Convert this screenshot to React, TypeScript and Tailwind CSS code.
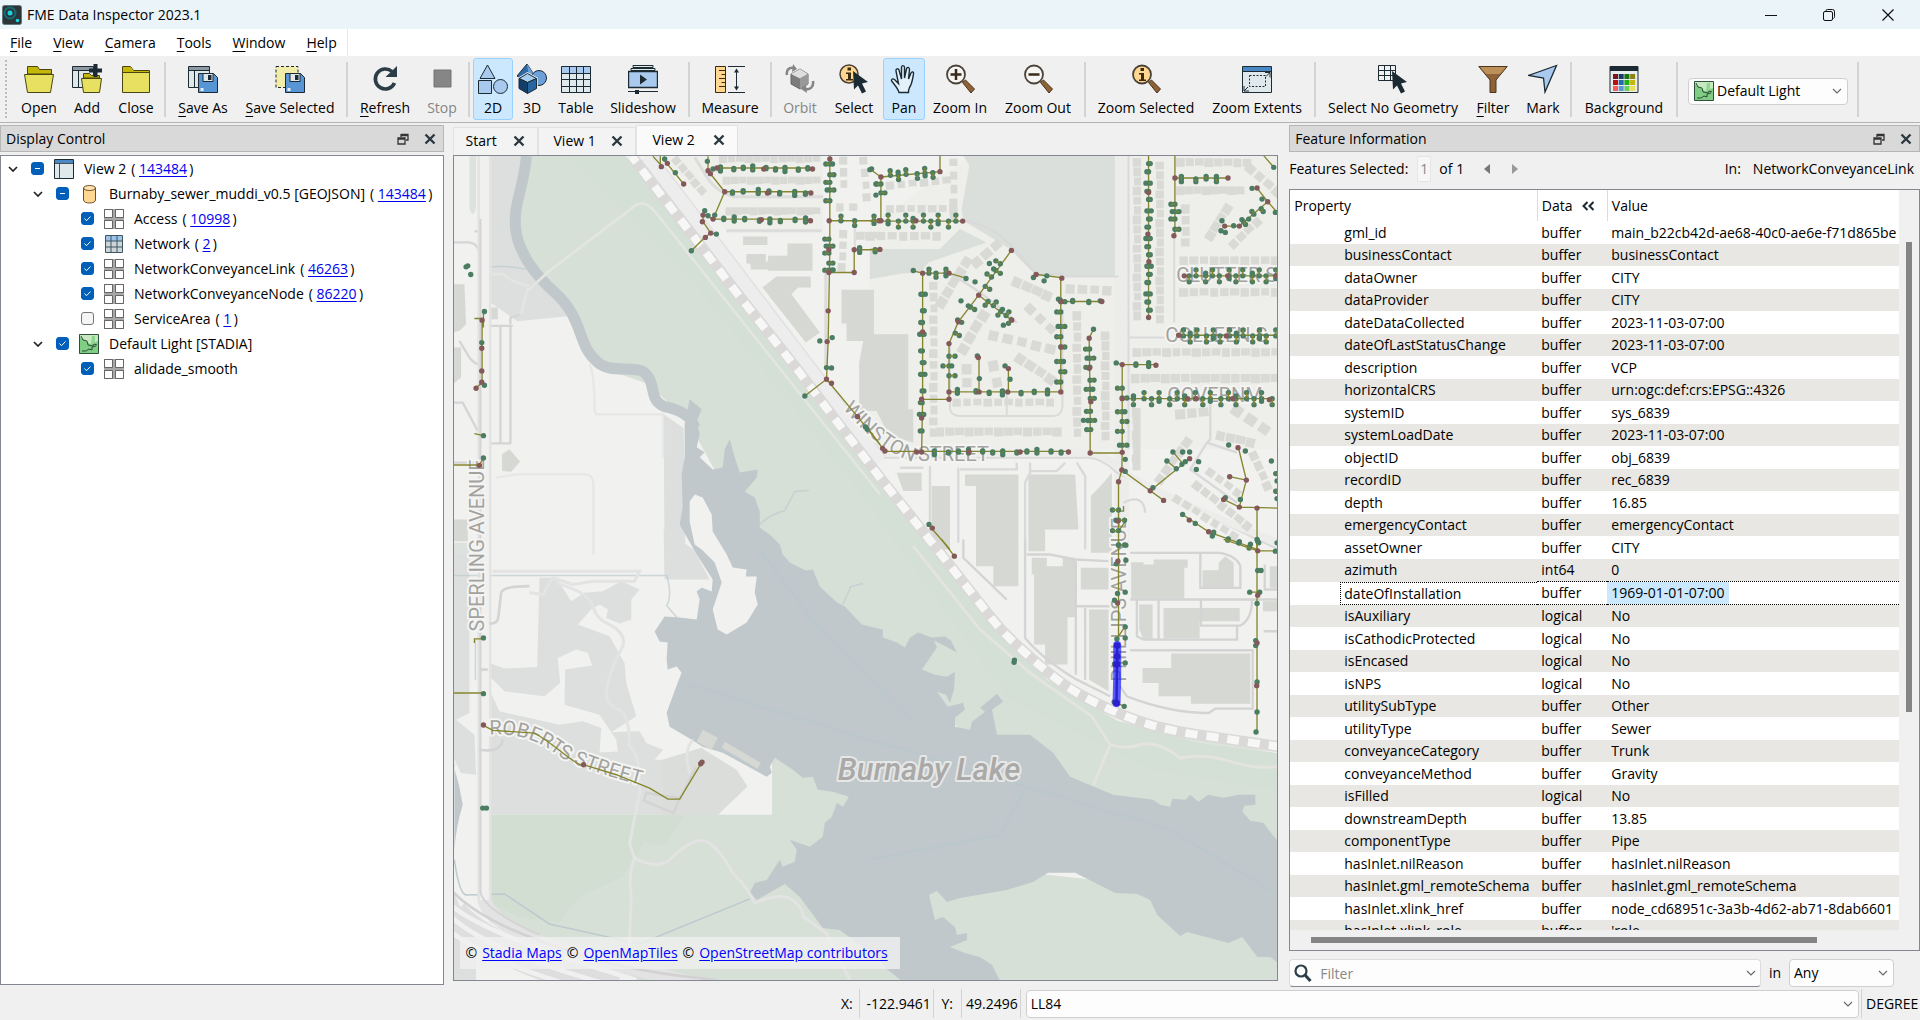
import React from "react";

/* ------------------------------------------------------------------ */
/* Toolbar icons                                                       */
/* ------------------------------------------------------------------ */

const INK = "#1c2b33";

function Icon({ children }: { children: React.ReactNode }) {
  return (
    <svg viewBox="0 0 30 30" className="size-[30px]" fill="none" aria-hidden="true">
      {children}
    </svg>
  );
}

const Floppy = () => (
  <g>
    <path d="M10.500 9.500h15l4 4v15h-19z" fill="#5795d4" stroke={INK} />
    <path d="M15 9.500h10v8h-10z" fill="#dfe9ec" stroke={INK} />
    <path d="M20 11h3.500v5h-3.500z" fill={INK} />
    <path d="M12.500 24h3v3h-3z" fill="#e8eef0" />
  </g>
);

const WindowBack = () => (
  <g>
    <path d="M.5 2.500h21v21h-21z" fill="#dfe7e8" stroke={INK} />
    <path d="M1 3h20v3H1z" fill="#8e9aa3" />
    <path d="M1 6.500h20M6.500 6.500v17" stroke={INK} />
  </g>
);

const Magnifier = ({ fill }: { fill: string }) => (
  <g>
    <path d="M17.500 18.500l3-2.500 9 9-3.500 4z" fill="#8f6136" stroke="#4a3520" />
    <circle cx="11" cy="10.500" r="9" fill={fill} stroke="#4a4136" strokeWidth="1.800" />
  </g>
);

const Info = () => (
  <path d="M9.500 4h3.500v3h-3.500zM8 9h5v6.500h2v1.500H8v-1.500h2v-5H8z" fill="#3d2a12" />
);

const Arrow = () => <path d="M14 7l15 11-6 1.500 4 8-4 2-4-8-4 4z" fill={INK} />;

const icons: Record<string, React.ReactNode> = {
  open: (
    <Icon>
      <path d="M3.500 10V2.500h10l2 3h12V10z" fill="#c4b70a" stroke="#4a4613" />
      <path d="M.5 10.500h29l-3 18h-23z" fill="#e8e060" stroke="#4a4613" />
    </Icon>
  ),
  add: (
    <Icon>
      <WindowBack />
      <path d="M11.500 14V9.500h6l2 2h8V14z" fill="#c4b70a" stroke="#4a4613" />
      <path d="M9.500 14.500h20l-2 14h-16z" fill="#e8e060" stroke="#4a4613" />
      <path d="M23.500 0v13M17 6.500h13" stroke={INK} strokeWidth="4" />
    </Icon>
  ),
  close: (
    <Icon>
      <path d="M1.500 28.500v-26h8l3 4h16v22z" fill="#e8e060" stroke="#4a4613" />
      <path d="M2 8V3h7.500l3 4H28v1z" fill="#c4b70a" />
      <path d="M1.500 8.500h27" stroke="#4a4613" />
    </Icon>
  ),
  saveAs: (
    <Icon>
      <WindowBack />
      <Floppy />
    </Icon>
  ),
  saveSel: (
    <Icon>
      <path d="M1 2.500h22v21H1z" fill="#f1ecaa" stroke={INK} strokeDasharray="3 2" />
      <Floppy />
    </Icon>
  ),
  refresh: (
    <Icon>
      <path d="M22 7.500A10 10 0 1 0 24.500 19" stroke="#2b3d47" strokeWidth="3.600" />
      <path d="M27 2v11H15.500z" fill="#2b3d47" />
    </Icon>
  ),
  stop: (
    <Icon>
      <path d="M7 6h17v17H7z" fill="#868686" stroke="#747474" />
    </Icon>
  ),
  two: (
    <Icon>
      <path d="M9.500 1L17 14.500H2z" fill="#a9caee" stroke={INK} />
      <path d="M.5 16.500h13v13H.5z" fill="#a9caee" stroke={INK} />
      <circle cx="22.500" cy="22.500" r="7" fill="#a9caee" stroke={INK} />
    </Icon>
  ),
  three: (
    <Icon>
      <path d="M10 0L0 12l8 5 10-5z" fill="#2e6aa5" stroke={INK} />
      <path d="M10 0l2 13 6-1z" fill="#6ba0d8" />
      <circle cx="22" cy="14" r="7.500" fill="#6ba0d8" stroke={INK} />
      <path d="M2 14.500l8.500-5 9 5v10l-9 5-8.500-5z" fill="#164e80" stroke="#eef" strokeWidth="2.500" />
      <path d="M2 14.500l8.500-5 9 5-9 4z" fill="#a5cbef" stroke={INK} />
      <path d="M10.500 18.500v11l9-5v-10z" fill="#26659f" stroke={INK} />
      <path d="M2 14.500v10l8.500 5v-11z" fill="#123f69" stroke={INK} />
    </Icon>
  ),
  table: (
    <Icon>
      <path d="M.5 2.500h29v26H.5z" fill="#dfe9ec" />
      <path d="M1 3h28v6H1z" fill="#a9caee" />
      <path d="M.5 2.500h29v26H.5zM.5 9.500h29M.5 15.500h29M.5 22.500h29M8.500 2.500v26M15.500 2.500v26M22.500 2.500v26" stroke={INK} />
    </Icon>
  ),
  slides: (
    <Icon>
      <path d="M5 1.500h20v2H5zM3 4.500h24v2H3z" fill="#dfe9ec" stroke={INK} />
      <path d="M.5 7.500h29v16H.5z" fill="#a9caee" stroke={INK} strokeWidth="1.400" />
      <path d="M12 10.500l7 5-7 5z" fill={INK} />
      <path d="M0 27.500h30" stroke={INK} />
      <path d="M7 26h4v4H7z" fill={INK} />
    </Icon>
  ),
  measure: (
    <Icon>
      <path d="M.5 2.500h10v26H.5z" fill="#ffd790" stroke="#3a2a10" />
      <path d="M4 6.500h6M6.500 10.500h4M4 14.500h6M6.500 18.500h4M4 22.500h6" stroke="#3a2a10" />
      <path d="M13 2.500h17M13 28.500h17M21.500 5v21" stroke={INK} />
      <path d="M19 8.500l2.500-4 2.500 4zM19 22.500l2.500 4 2.500-4z" fill={INK} />
    </Icon>
  ),
  orbit: (
    <Icon>
      <path d="M6 10l9-5 8 5v10l-8 5-9-5z" fill="#7c7c7c" stroke="#666" />
      <path d="M6 10l9-5 8 5-8 4.500z" fill="#dedede" />
      <path d="M15 14.500V25l8-5V10z" fill="#999" />
      <path d="M2 11C1 6 4 3 9 4M28 17c1 6-3 9-8 8" stroke="#858585" strokeWidth="2.500" />
      <path d="M8 0l4 5-5 3zM21 21l-5 4 6 4z" fill="#858585" />
    </Icon>
  ),
  select: (
    <Icon>
      <circle cx="10" cy="10" r="9" fill="#ffd790" stroke="#4a4136" strokeWidth="1.500" />
      <g transform="translate(-1 -.5)">
        <Info />
      </g>
      <Arrow />
    </Icon>
  ),
  pan: (
    <Icon>
      <path
        d="M10 28.500c-1-4-4-7-7-11-1.500-2 .5-3.500 2.500-2l4 4L7 7c-.5-2.500 2-3 3-1l2.500 9V3.500c0-2.500 3-2.500 3 0V14l2-9c.5-2.500 3-2 3 .5L19.500 15 22 9c1-2 3-1 2.500 1-1 6-1.500 10-4 13.500-.8 1.500-1 3-1 5z"
        stroke={INK}
        strokeWidth="1.400"
        fill="#e3f1fb"
      />
    </Icon>
  ),
  zin: (
    <Icon>
      <Magnifier fill="#f5f5f3" />
      <path d="M5.500 10.500h11M11 5v11" stroke="#3a2a1c" strokeWidth="2.500" />
    </Icon>
  ),
  zout: (
    <Icon>
      <Magnifier fill="#f5f5f3" />
      <path d="M5.500 10.500h11" stroke="#3a2a1c" strokeWidth="2.500" />
    </Icon>
  ),
  zsel: (
    <Icon>
      <Magnifier fill="#ffd790" />
      <Info />
    </Icon>
  ),
  zext: (
    <Icon>
      <path d="M.5 2.500h29v26H.5z" fill="#dfe9ec" stroke={INK} />
      <path d="M1 3h28v4H1z" fill="#4a87c5" />
      <path d="M.5 7.500h29" stroke={INK} />
      <path d="M7.500 11.500h16v11h-16z" stroke={INK} strokeDasharray="2 1.500" />
      <path d="M28 8.500v5M28 8.500h-5M28 8.500l-4 4M2 27v-5M2 27h5M2 27l4-4" stroke={INK} />
    </Icon>
  ),
  nogeo: (
    <Icon>
      <path d="M.5 1.500h17v15H.5zM.5 6.500h17M.5 11.500h17M6.500 1.500v15M12.500 1.500v15" stroke={INK} />
      <Arrow />
    </Icon>
  ),
  filter: (
    <Icon>
      <path d="M.8 2.500h28.400L18 16v12.500h-6V16z" fill="#8f6136" stroke="#4a3520" />
      <path d="M2 3h26l-6 7H8z" fill="#bd9057" />
    </Icon>
  ),
  mark: (
    <Icon>
      <path d="M28.500 1.500L.5 11.500l15 2.500 1.500 14z" fill="#a9caee" stroke={INK} strokeWidth="1.300" />
    </Icon>
  ),
  bg: (
    <Icon>
      <path d="M1 2.500h28v26H1z" fill="#e7edef" stroke={INK} />
      <path d="M1 2h28v5H1z" fill={INK} />
      {[
        ["#7d1416", "#1a3a68", "#167312", "#8c8210"],
        ["#b80f12", "#2968ab", "#20b018", "#c5b80c"],
        ["#ff5a55", "#5c98d8", "#6cce60", "#e9df5a"],
      ].map((r, j) => r.map((c, i) => <rect key={c} x={4 + i * 5.700} y={10 + j * 6} width="5" height="5" fill={c} />))}
    </Icon>
  ),
};

type Tool = { id: string; label: string; w: string; u?: boolean; on?: boolean; off?: boolean } | "sep";

const tools: Tool[] = [
  { id: "open", label: "Open", w: "w-12" },
  { id: "add", label: "Add", w: "w-12" },
  { id: "close", label: "Close", w: "w-[50px]" },
  "sep",
  { id: "saveAs", label: "Save As", w: "w-[68px]", u: true },
  { id: "saveSel", label: "Save Selected", w: "w-[106px]", u: true },
  "sep",
  { id: "refresh", label: "Refresh", w: "w-[68px]", u: true },
  { id: "stop", label: "Stop", w: "w-[46px]", off: true },
  "sep",
  { id: "two", label: "2D", w: "w-10", on: true },
  { id: "three", label: "3D", w: "w-[38px]" },
  { id: "table", label: "Table", w: "w-[50px]" },
  { id: "slides", label: "Slideshow", w: "w-[84px]" },
  "sep",
  { id: "measure", label: "Measure", w: "w-[74px]" },
  "sep",
  { id: "orbit", label: "Orbit", w: "w-[50px]", off: true },
  { id: "select", label: "Select", w: "w-[58px]" },
  { id: "pan", label: "Pan", w: "w-[42px]", on: true },
  { id: "zin", label: "Zoom In", w: "w-[70px]" },
  { id: "zout", label: "Zoom Out", w: "w-[86px]" },
  "sep",
  { id: "zsel", label: "Zoom Selected", w: "w-[114px]" },
  { id: "zext", label: "Zoom Extents", w: "w-[108px]" },
  "sep",
  { id: "nogeo", label: "Select No Geometry", w: "w-[148px]" },
  { id: "filter", label: "Filter", w: "w-[52px]", u: true },
  { id: "mark", label: "Mark", w: "w-[48px]" },
  "sep",
  { id: "bg", label: "Background", w: "w-[98px]" },
  "sep",
];

/* ------------------------------------------------------------------ */
/* Small shared pieces                                                 */
/* ------------------------------------------------------------------ */

function Accel({ text }: { text: string }) {
  return (
    <span>
      <span className="underline underline-offset-[3px]">{text[0]}</span>
      {text.slice(1)}
    </span>
  );
}

const Sep = () => <div className="mx-[3px] h-[55px] w-0.5 shrink-0 bg-[#d3d3d3]" />;

const Cross = () => (
  <svg viewBox="0 0 12 12" className="size-3" aria-hidden="true">
    <path d="M1.500 1.500l9 9M10.500 1.500l-9 9" stroke="#2b3840" strokeWidth="2.400" />
  </svg>
);

const Chevron = () => (
  <svg viewBox="0 0 10 6" className="h-1.5 w-2.5" fill="none" aria-hidden="true">
    <path d="M1 1l4 4 4-4" stroke="#6a6a6a" strokeWidth="1.200" />
  </svg>
);

const Terrain = () => (
  <svg viewBox="0 0 20 20" className="size-5 shrink-0" fill="none" aria-hidden="true">
    <path d="M.5.5h19v19H.5z" fill="#7fce83" stroke="#2e4f3a" />
    <path d="M1 1h18v6l-8 3-6-4-4-3z" fill="#c5e8c0" />
    <path d="M13 2h3v8h-4z" fill="#8fd68f" />
    <path d="M2 2l2 4 4 1 1 4 5 1 1-2 3 1M3 17h4l3-2 3 1v-3l4-1" stroke="#2e4f3a" />
  </svg>
);

function DockTitle({ title }: { title: string }) {
  return (
    <div className="flex h-[27px] shrink-0 items-center justify-between border border-[#b6b6b6] bg-[#d9d9d9] pr-[7px] pl-[5px]">
      <h2>{title}</h2>
      <div className="flex gap-[15px]">
        <button aria-label={`Float ${title}`}>
          <svg viewBox="0 0 12 12" className="size-3" fill="none" aria-hidden="true">
            <path d="M4 1.500h7v5.500H9M4 2.500h7M4 1v3M1 5h7v6H1zM1 6h7" stroke="#333" strokeWidth="1.300" />
          </svg>
        </button>
        <button aria-label={`Close ${title}`}>
          <Cross />
        </button>
      </div>
    </div>
  );
}

/* ------------------------------------------------------------------ */
/* Display control tree                                                */
/* ------------------------------------------------------------------ */

type Kind = "window" | "db" | "grid" | "table" | "terrain";
type Node = { label: string; count?: string; level: number; kind: Kind; state: "on" | "off" | "mixed"; open?: boolean };

const tree: Node[] = [
  { label: "View 2", count: "143484", level: 0, kind: "window", state: "mixed", open: true },
  { label: "Burnaby_sewer_muddi_v0.5 [GEOJSON]", count: "143484", level: 1, kind: "db", state: "mixed", open: true },
  { label: "Access", count: "10998", level: 2, kind: "grid", state: "on" },
  { label: "Network", count: "2", level: 2, kind: "table", state: "on" },
  { label: "NetworkConveyanceLink", count: "46263", level: 2, kind: "grid", state: "on" },
  { label: "NetworkConveyanceNode", count: "86220", level: 2, kind: "grid", state: "on" },
  { label: "ServiceArea", count: "1", level: 2, kind: "grid", state: "off" },
  { label: "Default Light [STADIA]", level: 1, kind: "terrain", state: "on", open: true },
  { label: "alidade_smooth", level: 2, kind: "grid", state: "on" },
];

const indents = ["pl-[7px]", "pl-8", "pl-[57px]"];

function TreeIcon({ kind }: { kind: Kind }) {
  if (kind === "terrain") return <Terrain />;
  return (
    <svg viewBox="0 0 20 20" className="size-5 shrink-0" fill="none" aria-hidden="true">
      {kind === "window" && (
        <>
          <path d="M.5.5h19v19H.5z" fill="#dfe9ec" stroke={INK} />
          <path d="M1 1h18v3H1z" fill="#4a87c5" />
          <path d="M.5 4.500h19M5.500 4.500v15" stroke={INK} strokeWidth=".8" />
        </>
      )}
      {kind === "db" && (
        <>
          <path d="M4.500 4v12c0 4 12 4 12 0V4" fill="#ffd790" stroke="#6b5030" />
          <ellipse cx="10.500" cy="4" rx="6" ry="2.500" fill="#ffe2ad" stroke="#6b5030" />
        </>
      )}
      {kind === "grid" && (
        <>
          <path d="M.5.5h19v19H.5z" fill="#fff" stroke="#777" />
          <path d="M10 0v20M0 10h20" stroke="#a9a9a9" strokeWidth="3" />
          <path d="M.5.500h8v8h-8zM11.500.5h8v8h-8zM.5 11.500h8v8h-8zM11.500 11.500h8v8h-8z" stroke="#666" />
        </>
      )}
      {kind === "table" && (
        <>
          <path d="M1.500 1.500h17v17h-17z" fill="#ccd6d8" />
          <path d="M2 2h16v5H2z" fill="#9cc4ea" />
          <path d="M1.500 1.500h17v17h-17zM1.500 7h17M1.500 13h17M7 1.500v17M13 1.500v17" stroke="#3f5662" />
        </>
      )}
    </svg>
  );
}

function TreeRow({ node }: { node: Node }) {
  return (
    <li className={`flex h-[25px] items-center whitespace-nowrap ${indents[node.level]}`}>
      {node.open ? (
        <button aria-label={`Collapse ${node.label}`} className="w-[23px]">
          <svg viewBox="0 0 10 6" className="h-1.5 w-2.5" fill="none" aria-hidden="true">
            <path d="M1 1l4 4 4-4" stroke="#222" strokeWidth="1.700" />
          </svg>
        </button>
      ) : (
        <span className="w-[23px]" />
      )}
      <label className="flex items-center">
        <span className="relative mr-2.5 flex size-[13px]">
          <input
            type="checkbox"
            defaultChecked={node.state !== "off"}
            className="size-[13px] appearance-none rounded-[3px] border border-[#777] bg-[#f5f5f5] checked:border-[#005fb8] checked:bg-[#005fb8]"
          />
          {node.state !== "off" && (
            <svg viewBox="0 0 13 13" className="pointer-events-none absolute inset-0 size-[13px]" fill="none" aria-hidden="true">
              <path d={node.state === "mixed" ? "M4 6.500h5" : "M3.500 6.500l2 2.200 4-4.200"} stroke="#fff" />
            </svg>
          )}
        </span>
        <TreeIcon kind={node.kind} />
        <span className="ml-2.5">{node.label}</span>
      </label>
      {node.count && (
        <span className="ml-[5px]">
          (&nbsp;
          <a href="#inspect" className="text-[#0000ee] underline underline-offset-2">
            {node.count}
          </a>
          &thinsp;)
        </span>
      )}
    </li>
  );
}

/* ------------------------------------------------------------------ */
/* Map                                                                 */
/* ------------------------------------------------------------------ */

const OLIVE = "#85862c";

/* Round marks at "x,y x,y ..." drawn as zero-length strokes. */
function Dots({ at, color, size = 16 }: { at: string; color: string; size?: number }) {
  const d = at
    .trim()
    .split(/\s+/)
    .map((p) => `M${p.replace(",", " ")}h.1`)
    .join("");
  return <path d={d} stroke={color} strokeWidth={size} strokeLinecap="round" />;
}

/* [x0, y0, x1, y1, count, size] */
type Row = [number, number, number, number, number, number];

function Houses({ rows }: { rows: Row[] }) {
  return (
    <g fill="#d9dad6">
      {rows.flatMap(([x0, y0, x1, y1, n, s], r) =>
        Array.from({ length: n }, (_, i) => {
          const t = n > 1 ? i / (n - 1) : 0;
          const x = x0 + (x1 - x0) * t;
          const y = y0 + (y1 - y0) * t;
          const a = (Math.atan2(y1 - y0, x1 - x0) * 180) / Math.PI;
          const k = s + ((i * 7 + r * 3) % 5) - 2;
          return <rect key={`${r}-${i}`} x={-k / 2} y={-s / 2} width={k} height={s - (i % 3) * 2} transform={`translate(${x} ${y}) rotate(${a})`} />;
        }),
      )}
    </g>
  );
}

/* [x0, y0, x1, y1, count, offset] : service connections along a main */
function Services({ runs }: { runs: Row[] }) {
  let stems = "";
  let ends = "";
  runs.forEach(([x0, y0, x1, y1, n, off], r) => {
    const len = Math.hypot(x1 - x0, y1 - y0);
    const nx = -(y1 - y0) / len;
    const ny = (x1 - x0) / len;
    for (let i = 0; i < n; i++) {
      const t = (i + 0.5 + (((i * 5 + r) % 3) - 1) * 0.12) / n;
      const x = x0 + (x1 - x0) * t;
      const y = y0 + (y1 - y0) * t;
      const s = (i + r) % 2 ? 1 : -1;
      stems += `M${x} ${y}l${nx * off * s} ${ny * off * s}`;
      ends += `M${x} ${y}h.1M${x + nx * off * s} ${y + ny * off * s}h.1`;
      if ((i + r) % 3 === 0) ends += `M${x - nx * 8 * s} ${y - ny * 8 * s}h.1`;
    }
  });
  return (
    <g>
      <path d={ends} stroke="#4b7d63" strokeWidth="16" strokeLinecap="round" />
      <path d={stems} stroke={OLIVE} strokeWidth="4" />
    </g>
  );
}

const rail =
  "M632 157L653 185L692 235L731 286L795 367L833 417L883 482L935 547L961 580L987 613Q1000 630 1015 644T1047 672T1080 695T1117 713T1157 727T1197 735T1238 741L1279 747";

const lake =
  "M690 400 685 425 685 458 682 475 683 508 680 525 697 555 713 580 712 592 702 588 697 592 700 600 697 620 680 618 665 617 655 632 660 642 668 643 667 660 668 670 677 667 682 673 678 683 667 713 670 727 687 737 703 747 723 753 767 777 772 773 770 767 775 758 793 770 803 778 813 777 818 790 833 792 849 797 843 807 837 803 832 817 825 823 823 837 810 847 790 840 797 850 795 862 783 867 780 860 767 880 755 883 750 893 757 900 785 884 800 897 823 928 840 930 880 960 888 970 902 981 1000 981 992 965 980 957 965 953 950 947 967 940 967 933 957 935 955 927 943 917 935 920 929 895 937 891 947 902 960 898 1007 890 1033 882 1048 873 1075 873 1115 893 1137 894 1150 900 1157 915 1180 936 1187 932 1228 943 1242 937 1257 957 1270 957 1280 965 1280 844 1272 835 1263 823 1250 821 1242 812 1244 806 1255 805 1255 795 1238 795 1223 798 1208 795 1198 802 1190 795 1185 800 1172 799 1170 807 1160 805 1153 800 1113 795 1070 777 1053 753 1030 735 997 735 992 710 1003 702 997 694 980 708 985 712 972 722 970 730 955 727 955 718 965 710 963 703 948 707 937 692 946 695 950 703 954 690 955 672 947 677 935 675 922 670 937 648 934 641 944 646 957 653 951 641 945 637 932 638 918 633 910 638 905 648 897 643 883 638 883 630 870 627 862 625 845 607 837 603 820 587 813 570 806 571 790 563 783 555 780 545 770 535 760 528 760 512 755 498 745 492 757 478 758 470 740 473 735 458 730 440 725 450 723 468 713 470 700 458 705 453 697 448 700 435 697 422 702 410Z";

function MapCanvas() {
  return (
    <svg viewBox="454 157 824 823" preserveAspectRatio="xMidYMid slice" className="block h-full w-full" fill="none" role="img" aria-label="Map of Burnaby Lake sewer network">
      <path d="M454 157h825v824H454z" fill="#f1f1ef" />
      {/* Parks and woodland */}
      <path d="M485 157h45l-10 80 40 65 8 15-50 5-32-22z" fill="#dcdfdd" />
      <path d="M664 415l20 14 2 145-21 3z" fill="#dcdfdd" />
      <path d="M664 530l30 20 16 30h-45z" fill="#dcdfdd" />
      <path d="M530 157H626L692 243 795 375 905 517 980 612 1047 680 1117 721 1197 743 1279 754V900L1000 760 780 590 690 425 650 385 600 368 560 300 518 240Z" fill="#d6e0d6" />
      <path d="M626 157L795 375 980 612 1047 680 1117 721 1279 754 1279 790 1150 770 1010 700 850 480 700 290 570 157Z" fill="#d3ded4" opacity=".7" />
      <path d="M490 815H772L775 750 1000 870 1279 900V981H640Q560 950 490 922Z" fill="#d6e0d6" />
      <path d="M490 815h195l-20 32-20-5-22 35-43 20-20 25-40-5-30-15z" fill="#d1dcd1" opacity=".6" />

      {/* Western grounds */}
      <g transform="translate(450 550) scale(.33333)">
        <path d="M10 0H60V490L20 510 75 555 80 675 35 670 10 620ZM10 1020L80 1180V1290H10Z" fill="#dcdfdd" />
        <path d="M270 85H320L365 155 405 130 460 125 515 95 570 120 545 150V210L510 222 470 205 475 180 450 165 425 180 385 225 480 260 525 340 530 400 560 500 485 548 450 495 345 465 347 360 428 348 415 310 380 300 325 325 332 400 285 440 165 425 120 380 120 340 165 357 263 352Z" fill="#dcdfdd" />
        <path d="M115 410L150 485 330 525 400 515 455 535 450 608 505 605 500 570 485 548 570 545 590 580 640 600 615 630 640 630 755 595 860 660 893 710 805 795H120Z" fill="#dcdfdd" />
        <path d="M975 625L1000 790H805L893 710 860 660 760 600Z" fill="#f1f1ef" />
        <path d="M967 625H1010V795H967Z" fill="#d6e0d6" />
        <path d="M805 795L893 710 860 660 755 595 640 630V795Z" fill="#dbdddb" />
        <path d="M10 640Q30 700 40 765 20 830 15 900V640Z" fill="#c0c8cc" />
      </g>

      {/* Water */}
      <path d={lake} fill="#c0c8cc" />
      <path d="M527 157C524 190 514 205 516 228C518 255 540 280 555 293C585 320 577 345 597 362C610 375 632 366 643 372C658 382 648 400 664 407Q690 412 695 428" stroke="#c0c8cc" strokeWidth="11" />
      <path d="M690 502 695 495 703 498 712 515 713 532 727 555 733 568 747 570 746 577 757 577 755 593 758 605 747 623 727 635 718 630 713 610 722 583 715 563 702 550 695 545 690 522Z" fill="#f1f1ef" />
      <path d="M697 742l6-12 15 8-6 12zM725 742l36 21-3 6-36-21z" fill="#d6d8d4" />
      <path d="M487 268q20-2 40 2M454 576H667q6 20 0 30l12 14M476 640v40M760 525q10-10 25-14l10-19 14-1M843 605l8-18 12-3" stroke="#bdcbd0" strokeWidth="1.500" opacity=".7" />
      <path d="M455 860q5 35 12 35l38-1 45 30 90 20 110-45" stroke="#bccacf" strokeWidth="1.500" />
      <path d="M690 685l180 55 300 90 108 65M870 860l130-25 25-45M760 550l60 80 90 90" stroke="#b8c8ca" strokeWidth="2" opacity=".6" />

      {/* Northern blocks */}
      <g transform="translate(870 150) scale(.33333)">
        <path d="M300 20H1225V900H0V230Z" fill="#eeeeea" />
        <path d="M280 20H755V382H500L420 300 280 215 275 180 298 50ZM0 300H210L270 240 350 280 175 340 150 372H100L0 390Z" fill="#dbdfdb" />
        <path d="M755 20V1200" stroke="#ececea" strokeWidth="42" />
        <path d="M775 20V900M580 382H745M772 565H900M912 260V520M240 590V780Q245 800 270 800H550Q575 800 577 770V480M410 720V800M0 925H640Q690 920 740 970L1225 1200" stroke="#dadada" strokeWidth="6" />
        <path d="M0 910H650Q700 910 760 965T1225 1180" stroke="#ececeb" strokeWidth="22" />
        <path d="M280 215Q380 230 440 310L500 375H580M235 372Q330 420 440 520M1020 765V870L1010 880 960 960 1100 1060M1010 880L1100 910" stroke="#d9d9db" strokeWidth="7" />
        <Houses
          rows={[
            [250, 40, 250, 200, 5, 24], [60, 110, 230, 95, 6, 24], [60, 180, 250, 180, 7, 24], [0, 262, 200, 262, 7, 26],
            [800, 40, 800, 500, 17, 25], [868, 50, 868, 510, 17, 25], [930, 40, 1130, 42, 8, 26], [930, 125, 1110, 125, 8, 26],
            [945, 180, 945, 280, 4, 26], [1020, 260, 1070, 180, 4, 28], [1090, 285, 1160, 220, 4, 26], [1140, 60, 1220, 130, 4, 28],
            [940, 335, 1215, 335, 10, 26], [940, 430, 1215, 430, 10, 26], [800, 610, 1215, 610, 15, 26], [795, 688, 1215, 688, 15, 28],
            [798, 790, 798, 950, 8, 26], [190, 410, 190, 850, 14, 25], [215, 460, 290, 340, 5, 30], [320, 340, 380, 290, 3, 30],
            [280, 600, 340, 500, 4, 32], [290, 660, 290, 700, 2, 30], [370, 560, 540, 600, 5, 30], [370, 650, 380, 700, 2, 30],
            [450, 630, 540, 690, 4, 30], [440, 400, 530, 440, 4, 30], [480, 480, 540, 540, 3, 28], [600, 420, 710, 425, 4, 28],
            [620, 500, 620, 850, 12, 26], [705, 560, 705, 860, 11, 26], [210, 848, 560, 848, 13, 27], [260, 760, 540, 760, 10, 24],
            [870, 990, 950, 880, 5, 28], [980, 1010, 1130, 1130, 7, 26], [920, 1050, 1090, 1160, 7, 24], [1050, 860, 1140, 880, 4, 28],
            [930, 795, 1000, 790, 3, 30], [1100, 785, 1180, 840, 3, 34], [1020, 970, 1100, 1030, 4, 24], [1150, 920, 1190, 1010, 4, 26],
          ]}
        />
        {/* Warehouses south of Winston Street */}
        <path d="M285 975H445V1310H370V1250H318V1010H285ZM475 975H615L625 1140H525V1205H475ZM700 1000L725 970V1210H662V1040ZM185 1010H240V1200H185ZM80 970H155V1025H100Z" fill="#d6d8d4" />
        <path d="M180 950V1200M265 955V1180M440 940V960H270M480 940V970L465 1000V1200M480 965H560L585 940M620 940L645 980V1200M90 955H160M760 1060Q820 1030 825 1090" stroke="#d9d9d9" strokeWidth="7" />
      </g>

      <g transform="translate(450 125) scale(.33333)">
        <path d="M630 95H1120V320H830L740 200Z" fill="#eeeeea" />
        <Houses
          rows={[
            [680, 110, 755, 200, 5, 24], [820, 105, 1100, 105, 12, 24], [830, 170, 1100, 170, 12, 24], [840, 262, 1100, 262, 12, 24],
            [1180, 110, 1180, 180, 3, 24], [1170, 250, 1210, 250, 2, 24], [1180, 330, 1175, 430, 4, 24], [1240, 110, 1250, 220, 4, 24], [1230, 335, 1280, 335, 3, 24],
          ]}
        />
        <path d="M880 337H953V363H880ZM890 390H948V412H955V395H1013V358H1088V440H955V436H903V418H890ZM980 457H1083V490H1045L1025 510 1110 625 1068 655 938 490Z" fill="#d6d8d4" />
        <path d="M1175 497H1272V630H1375V855H1390V955L1315 930 1280 860H1228V715L1240 650H1190V598H1175Z" fill="#d6d8d4" />
        <path d="M10 480H45L50 600 30 620 10 625ZM10 670H35V760L10 780ZM158 990L180 975 212 1012 185 1042 158 1040ZM120 550H145V585H120ZM10 1185H55V1250H10Z" fill="#d6d8d4" />
        <path d="M60 95H80V250Q70 290 60 250ZM10 1255H55V1290H10Z" fill="#dce2de" />
        {/* Streets */}
        <path d="M735 100L760 140Q790 200 850 218H1120M830 320H1115M1128 440V730" stroke="#dcdcdc" strokeWidth="9" />
        <path d="M1215 300V380" stroke="#dedede" strokeWidth="7" />
        <path d="M592 95L1290 1010" stroke="#e2e2e2" strokeWidth="48" />
        <path d="M592 95L1290 1010" stroke="#ededed" strokeWidth="38" />
        <path d="M550 250L300 440 235 500M580 238Q600 240 630 280L1290 1110M550 250Q565 236 580 238M240 485Q200 480 160 450H100M235 490L215 570" stroke="#e3e5e2" strokeWidth="8" />
        <path d="M420 720Q435 750 435 860L440 870H640V1000M140 1060L200 1050H410Q432 1050 432 1090V1290" stroke="#e6e7e6" strokeWidth="7" />
        <path d="M95 605H190M120 605V955M153 605V955M183 605V957M90 957H185M183 600V580L210 572M10 355H60Q90 360 95 400M30 650L60 700Q75 720 90 720M10 835H40L85 920M75 322H90M10 1015H90" stroke="#d4d5d5" strokeWidth="7" />
      </g>

      <path d="M485 157V900Q490 925 560 950L700 985" stroke="#e4e3e3" strokeWidth="14" />
      <path d="M485 157V900" stroke="#f0f0ef" strokeWidth="9" />
      <path d="M481 220V892Q484 910 540 935" stroke="#d5d3d4" strokeWidth="2" />

      <g transform="translate(450 550) scale(.33333)">
        <path d="M130 65H570L555 95 430 95 370 105 310 85 280 135 240 130M320 100Q420 130 430 170Q440 210 480 225Q530 250 520 290Q470 380 470 440Q475 470 510 480 540 500 540 590 575 620 570 730L540 880 555 925Q535 970 545 1040L535 1290M555 925Q620 960 660 930 720 870 760 872Q800 880 850 970 900 1020 915 1060 980 1030 1020 1045 1060 1070 1060 1100L1130 1150 1200 1290M730 570Q700 600 720 670" stroke="#e2e3e2" strokeWidth="9" />
        <path d="M240 110Q160 110 155 130L147 200Q147 222 120 222M90 360H115M90 600Q155 610 160 570M590 730L583 752 672 790 690 745ZM740 650L690 750" stroke="#d5d4d4" strokeWidth="8" />
        <path d="M10 1090Q100 1200 500 1320" stroke="#dedede" strokeWidth="90" />
        <path d="M10 1070Q120 1160 560 1290M10 1105Q130 1210 500 1310M10 1150Q130 1240 380 1310" stroke="#f0f0f0" strokeWidth="14" />
        <path d="M10 1025Q100 1120 350 1200 500 1260 800 1290" stroke="#d3d1d2" strokeWidth="8" />
      </g>

      {/* Southern industrial lots */}
      <g transform="translate(870 540) scale(.33333)">
        <path d="M485 55H530V80H578V55H615V233H592V375H525V315H492V105H485ZM632 85H715V150H632ZM657 210H715V455L657 420ZM783 68H820V75H850V60H952V85H942V178H783ZM807 195H847V300H820L807 270ZM880 205H1108V245H988V297H880ZM997 92H1045V70L1065 50 1090 70V145H997ZM903 342H1140V492H962V470H865V430H817V385H903ZM1178 185H1220V215H1178ZM1198 80H1225V145H1198Z" fill="#d6d8d4" />
        <path d="M465 0V295Q520 360 620 420L720 470M470 45H540L615 60 715 65M617 65V405M617 200H720M645 205V420M780 180H1225M780 40H1050Q1100 50 1110 80V145H990V40M800 180V290L820 300H1100V260M865 180V300M780 332H1147V507H1035L1015 520Q900 520 770 470L750 440M992 182V258H1110Q1145 240 1145 180M1183 75V150H1225M1180 275H1225M280 0V55L410 180" stroke="#d4d4d4" strokeWidth="7" />
        <path d="M130 20L330 270 480 400 665 530 720 615 670 735M720 615Q760 630 810 615T930 655Q1000 640 1080 665T1225 680" stroke="#e3e3e0" strokeWidth="9" />
      </g>

      <path d={rail} stroke="#dad9d7" strokeWidth="11" />
      <path d={rail} stroke="#f7f7f7" strokeWidth="8" strokeDasharray="12 9" strokeDashoffset="4" />

      {/* Place names */}
      <defs>
        <path id="winston" d="M843 409Q880 452 912 462H1020" />
        <path id="roberts" d="M490 735Q530 732 560 757Q590 773 660 790" />
      </defs>
      <g
        fontFamily="Roboto, sans-serif"
        fontSize="20"
        fill="#a2a2a0"
        stroke="#f4f4f2"
        strokeWidth="4"
        strokeLinejoin="round"
        style={{ paintOrder: "stroke" }}
      >
        <text><textPath href="#winston">WINSTON STREET</textPath></text>
        <text><textPath href="#roberts">ROBERTS STREET</textPath></text>
        <text transform="translate(485 632) rotate(-90)">SPERLING AVENUE</text>
        <text transform="translate(1126 682) rotate(-90)">PHILLIPS AVENUE</text>
        <text x="1176" y="283">CLUTTER S</text>
        <text x="1165" y="343">COLLEEN S</text>
        <text x="1167" y="403">GOVERNM</text>
      </g>
      <g fontFamily="Roboto, sans-serif" fontSize="31" fontStyle="italic" fontWeight="500" fill="#aaa9a8" stroke="#e6e7e7" strokeWidth="4" strokeLinejoin="round" style={{ paintOrder: "stroke" }}>
        <text x="838" y="780">Burnaby Lake</text>
      </g>

      {/* Sewer network: north-west */}
      <g transform="translate(450 125) scale(.33333)">
        <path
          d="M632 95V125M610 97L635 125M645 110L702 180M775 97V140L825 203H1085M800 132H1090M825 203L790 285H1085M760 290V270L790 285M760 293L783 327 765 340 725 380M783 327L800 330M1140 97V375L1135 650 1130 765 1065 815M1140 290H1290M1137 445H1213V377H1290M1130 765L1223 877 1290 960M98 585V775L78 793M75 583H98M10 1022H90L102 1000M75 928L102 934M102 560V610M98 775L105 783"
          stroke={OLIVE}
          strokeWidth="4"
        />
        <Services
          runs={[
            [800, 133, 1090, 135, 9, 4], [830, 203, 1085, 207, 7, 4], [800, 286, 1085, 290, 8, 4], [1140, 110, 1140, 240, 5, 12],
            [1150, 290, 1290, 290, 3, 14], [1137, 330, 1137, 450, 5, 12], [1215, 377, 1290, 377, 2, 6],
          ]}
        />
        <Dots color="#4b7d63" at="645,105 677,146 773,112 790,135 765,260 775,275 795,273 800,330 725,380 1110,650 1147,640 1130,730 1145,731 1065,815 1247,908 1252,915 1265,135 1278,180 1278,213 105,562 97,655 105,783 102,934 102,1001 50,428 55,425 64,451 1150,437" />
        <Dots color="#84595a" at="635,128 653,118 702,180 775,140 782,149 802,132 942,135 1088,135 825,203 953,207 1083,207 760,273 758,293 790,285 783,327 767,340 935,287 1082,290 1140,105 1138,290 1137,377 1137,445 1213,445 1213,377 1135,560 1132,652 1130,765 1145,777 1223,877 98,588 97,672 97,740 97,774 80,792 90,1023 1287,290" />
      </g>

      {/* Sewer network: north-east */}
      <g transform="translate(870 150) scale(.33333)">
        <path
          d="M0 216H278M33 215V84L0 60M33 84L210 68V20M0 301H33M158 372V750L155 908M130 365L158 372H237L290 388M424 304L326 438 265 518 237 583V750H155M326 438L425 513M237 728H572V385L500 376M572 457H700M327 728V625M415 728V658M660 911V757L657 567 670 540M660 911H756M45 906H595M0 845L45 906M756 909V646H857M756 748H1210M735 640L757 646M835 20V505M914 20V260M914 87H1073M1160 117L1192 158 1107 231H1063M1192 158L1225 195M1180 20L1215 60M942 380H1225M925 558H1225M756 909L755 962 840 1024 880 1053M755 962L745 997V1200M840 1024L958 928M1103 890L1128 992 1107 1073 1060 1050M1078 982L1128 992M1107 1073L1225 1076M1160 1076V1200M937 1095L1015 1147 1160 1200M175 1125L240 1200M760 1070V1085H740M770 1110L745 1145M890 935L918 958M908 908L940 945"
          stroke={OLIVE}
          strokeWidth="4"
        />
        <Services
          runs={[
            [45, 216, 270, 216, 9, 18], [33, 90, 33, 150, 2, 12], [45, 80, 205, 70, 6, 14], [158, 420, 156, 860, 11, 5],
            [165, 372, 237, 372, 3, 12], [400, 330, 340, 420, 4, 16], [310, 460, 245, 570, 3, 14], [345, 450, 435, 520, 5, 14],
            [237, 600, 237, 700, 3, 18], [245, 728, 560, 730, 7, 4], [572, 440, 572, 720, 8, 12], [658, 580, 662, 860, 9, 12],
            [180, 908, 590, 908, 12, 3], [756, 700, 756, 900, 6, 14], [770, 648, 857, 648, 2, 4], [780, 748, 1215, 748, 17, 18],
            [835, 30, 835, 500, 17, 5], [914, 150, 914, 250, 4, 12], [920, 90, 1060, 90, 4, 8], [945, 380, 1225, 380, 12, 18],
            [925, 560, 1225, 560, 13, 18], [1110, 225, 1185, 170, 3, 10], [580, 457, 690, 457, 2, 3], [745, 1060, 745, 1200, 4, 18],
            [1015, 1147, 1160, 1200, 4, 4], [1220, 960, 1220, 1060, 4, 4],
          ]}
        />
        <Dots color="#4b7d63" at="130,364 288,388 315,398 358,343 273,455 400,528 322,620 328,688 405,650 420,690 640,813 670,540 565,450 570,452 738,641 765,930 765,966 890,935 908,908 937,908 958,908 985,937 978,960 918,958 935,945 945,937 1075,887 1125,905 1110,1050 1065,1045 1203,935 937,1095 975,1122 177,1125 1145,118 1175,150 1210,55 1215,190 1055,215 1052,245 1065,250 1090,230 1135,210 848,1015 1160,1170 1165,1180 490,385 530,380 522,395 0,62 690,455" />
        <Dots color="#84595a" at="278,216 138,215 33,215 33,84 210,68 30,301 158,372 237,372 158,548 155,750 155,806 155,908 237,750 237,728 237,583 265,518 326,438 424,304 425,513 325,625 327,728 413,728 415,658 572,728 573,593 573,457 575,387 498,376 695,457 657,567 657,657 662,757 660,911 756,909 756,748 756,646 857,648 835,130 833,255 836,338 835,505 914,87 911,260 1073,87 1160,117 1192,158 1107,231 1063,231 942,380 1072,380 1217,380 925,558 1068,560 952,748 978,748 1087,748 1197,751 45,905 38,897 140,908 297,908 450,908 595,908 755,962 745,997 743,1115 840,1024 880,1053 958,928 1103,895 1128,992 1078,982 1107,1073 1060,1050 1160,1076 957,1112 1015,1147 187,1136" />
      </g>

      {/* Sewer network: south */}
      <g transform="translate(870 540) scale(.33333)">
        <path d="M745 0V300M740 298L765 260M740 490L762 500M1160 0V577M1060 0L1162 34H1215M1138 158H1160M215 0L253 50M740 370H765" stroke={OLIVE} strokeWidth="4" />
        <Dots color="#4b7d63" at="745,17 767,17 767,62 738,73 742,162 765,158 733,182 765,262 740,298 765,295 765,370 733,373 732,487 762,500 433,362 432,368 1105,10 1162,5 1215,35 1220,10 1162,93 1172,93 1138,158 1168,158 1160,192 1156,303 1156,318 1160,427 1160,517 1157,577" />
        <Dots color="#84595a" at="743,65 742,190 253,50 1162,34 1162,167 1160,310 1159,438" />
        <path d="M741 316V420L739 490" stroke="#2020ff" strokeOpacity=".72" strokeWidth="24" strokeLinecap="round" />
        <path d="M741 316L739 490" stroke="#2424c8" strokeWidth="7" />
        <Dots color="#2b1fcf" size={20} at="741,318 741,350 740,374 739,490" />
      </g>
      <g transform="translate(450 550) scale(.33333)">
        <path d="M102 527L130 542 255 550Q290 570 340 610T402 645L500 675 600 715 655 748H690L755 640M10 430H100M75 280V268H102M95 775H115" stroke={OLIVE} strokeWidth="4" />
        <Dots color="#4b7d63" at="102,265 102,432 100,775 111,775" />
        <Dots color="#84595a" at="102,526 402,645 757,637 753,642" />
      </g>
    </svg>
  );
}

/* ------------------------------------------------------------------ */
/* Feature table                                                       */
/* ------------------------------------------------------------------ */

const rows: [string, string, string][] = [
  ["gml_id", "buffer", "main_b22cb42d-ae68-40c0-ae6e-f71d865be"],
  ["businessContact", "buffer", "businessContact"],
  ["dataOwner", "buffer", "CITY"],
  ["dataProvider", "buffer", "CITY"],
  ["dateDataCollected", "buffer", "2023-11-03-07:00"],
  ["dateOfLastStatusChange", "buffer", "2023-11-03-07:00"],
  ["description", "buffer", "VCP"],
  ["horizontalCRS", "buffer", "urn:ogc:def:crs:EPSG::4326"],
  ["systemID", "buffer", "sys_6839"],
  ["systemLoadDate", "buffer", "2023-11-03-07:00"],
  ["objectID", "buffer", "obj_6839"],
  ["recordID", "buffer", "rec_6839"],
  ["depth", "buffer", "16.85"],
  ["emergencyContact", "buffer", "emergencyContact"],
  ["assetOwner", "buffer", "CITY"],
  ["azimuth", "int64", "0"],
  ["dateOfInstallation", "buffer", "1969-01-01-07:00"],
  ["isAuxiliary", "logical", "No"],
  ["isCathodicProtected", "logical", "No"],
  ["isEncased", "logical", "No"],
  ["isNPS", "logical", "No"],
  ["utilitySubType", "buffer", "Other"],
  ["utilityType", "buffer", "Sewer"],
  ["conveyanceCategory", "buffer", "Trunk"],
  ["conveyanceMethod", "buffer", "Gravity"],
  ["isFilled", "logical", "No"],
  ["downstreamDepth", "buffer", "13.85"],
  ["componentType", "buffer", "Pipe"],
  ["hasInlet.nilReason", "buffer", "hasInlet.nilReason"],
  ["hasInlet.gml_remoteSchema", "buffer", "hasInlet.gml_remoteSchema"],
  ["hasInlet.xlink_href", "buffer", "node_cd68951c-3a3b-4d62-ab71-8dab6601"],
  ["hasInlet.xlink_role", "buffer", "'role"],
];

function FeatureTable() {
  return (
    <div className="flex min-h-0 flex-1 flex-col border border-[#828790] bg-[#f0f0f0]">
      <div className="flex min-h-0 flex-1">
        <div className="min-w-0 flex-1 overflow-hidden bg-white">
          <table className="w-full table-fixed border-collapse text-left">
            <colgroup>
              <col className="w-[247px]" />
              <col className="w-[70px]" />
              <col />
            </colgroup>
            <thead>
              <tr className="h-[31px]">
                <th className="border-r border-[#dcdcdc] pl-1 font-normal">Property</th>
                <th className="border-r border-[#dcdcdc] pl-1 font-normal">
                  <span className="flex items-center gap-2">
                    Data
                    <svg viewBox="0 0 14 10" className="h-2.5 w-3.5" fill="none" aria-hidden="true">
                      <path d="M6.500 1l-4 4 4 4M12.500 1l-4 4 4 4" stroke={INK} strokeWidth="2" />
                    </svg>
                  </span>
                </th>
                <th className="pl-1 font-normal">Value</th>
              </tr>
            </thead>
            <tbody>
              {rows.map(([p, d, v], i) => {
                const picked = p === "dateOfInstallation";
                return (
                  <tr key={p} className="h-[23px] even:h-[22px] even:bg-[#e8e7e3]">
                    <td className="p-0 pl-[50px] whitespace-nowrap">
                      <div className={picked ? "h-[23px] border-y border-l border-dotted border-black pl-[3px]" : "pl-1"}>{p}</div>
                    </td>
                    <td className={`p-0 pl-1 ${picked ? "border-y border-dotted border-black" : ""}`}>{d}</td>
                    <td className={`overflow-hidden p-0 whitespace-nowrap ${picked ? "border-y border-dotted border-black" : ""}`}>
                      <span className={picked ? "inline-block bg-[#cce8ff] pr-1 pl-1" : "pl-1"}>{v}</span>
                    </td>
                  </tr>
                );
              })}
            </tbody>
          </table>
        </div>
        <div className="flex w-5 shrink-0 justify-center pt-[52px]">
          <div className="h-[470px] w-1.5 bg-[#858585]" />
        </div>
      </div>
      <div className="flex h-5 shrink-0 items-center pr-5 pl-[21px]">
        <div className="h-1.5 w-[86%] bg-[#858585]" />
      </div>
    </div>
  );
}

/* ------------------------------------------------------------------ */
/* Window                                                              */
/* ------------------------------------------------------------------ */

function Select({ label, value, className }: { label: string; value: string; className: string }) {
  return (
    <span className="relative flex h-full w-full items-center">
      <select aria-label={label} defaultValue={value} className={`h-full w-full appearance-none rounded-sm border border-[#cfcfcf] bg-[#fdfdfd] ${className}`}>
        <option>{value}</option>
      </select>
      <span className="pointer-events-none absolute right-1.5">
        <Chevron />
      </span>
    </span>
  );
}

export default function App() {
  return (
    <div className="flex h-screen flex-col overflow-hidden bg-[#f0f0f0] font-['Open_Sans',sans-serif] text-sm leading-[22px] text-black">
      <header className="flex h-[29px] shrink-0 items-center bg-[#ebf4f9] pl-0.5">
        <svg viewBox="0 0 20 20" className="size-5" fill="none" aria-hidden="true">
          <rect x=".5" y=".5" width="19" height="19" rx="2" fill="#2b3538" stroke="#66777b" />
          <circle cx="8" cy="8" r="5.500" stroke="#156c76" strokeWidth="2" />
          <circle cx="8" cy="8" r="2.500" fill="#19d3e0" />
          <circle cx="15.500" cy="15.500" r="1.800" fill="#19d3e0" />
        </svg>
        <h1 className="ml-[5px]">FME Data Inspector 2023.1</h1>
        <div className="ml-auto flex pr-[25px] *:flex *:w-3.5 *:justify-center">
          <button aria-label="Minimize" className="mr-11">
            <svg viewBox="0 0 14 14" className="size-3.5"><path d="M1 7.500h12" stroke="#111" /></svg>
          </button>
          <button aria-label="Restore" className="mr-[45px]">
            <svg viewBox="0 0 14 14" className="size-3.5" fill="none">
              <rect x="1.500" y="3.500" width="9" height="9" rx="1.500" stroke="#111" />
              <path d="M4 3.500V2.500Q4 1.500 5.500 1.500h5q2 0 2 2v5q0 1.500-1 2" stroke="#111" />
            </svg>
          </button>
          <button aria-label="Close">
            <svg viewBox="0 0 14 14" className="size-3.5"><path d="M1.500 1.500l11 11M12.500 1.500l-11 11" stroke="#111" strokeWidth="1.200" /></svg>
          </button>
        </div>
      </header>

      <nav className="flex h-[27px] shrink-0 items-center bg-white">
        <div className="flex h-full items-center gap-[21px] border-r border-[#e8e8e8] pr-2.5 pl-2.5">
          {["File", "View", "Camera", "Tools", "Window", "Help"].map((m) => (
            <button key={m}>
              <Accel text={m} />
            </button>
          ))}
        </div>
      </nav>

      <div role="toolbar" className="flex h-[67px] shrink-0 items-center border-b border-[#b3b3b3] pl-[5px]">
        <div className="mr-2 h-[58px] w-0 border-l-2 border-dotted border-[#bdbdbd]" />
        {tools.map((t, i) =>
          t === "sep" ? (
            <Sep key={i} />
          ) : (
            <button
              key={t.id}
              disabled={t.off}
              className={`flex h-[62px] shrink-0 flex-col items-center justify-between rounded-[3px] border pt-[5px] whitespace-nowrap ${t.w} ${
                t.on ? "border-[#99d1ff] bg-[#cce8ff]" : "border-transparent"
              } ${t.off ? "text-[#858585]" : ""}`}
            >
              {icons[t.id]}
              {t.u ? <Accel text={t.label} /> : <span>{t.label}</span>}
            </button>
          ),
        )}
        <div className="relative mt-1 mr-1.5 ml-[7px] flex h-[27px] w-[160px] shrink-0 items-center">
          <Select label="Background map" value="Default Light" className="pl-7" />
          <span className="pointer-events-none absolute left-1.5 flex">
            <Terrain />
          </span>
        </div>
        <Sep />
      </div>

      <main className="flex min-h-0 flex-1 gap-[9px] pt-0.5">
        <section className="flex w-[23.100%] shrink-0 flex-col gap-[3px] pb-0.5">
          <DockTitle title="Display Control" />
          <ul className="flex-1 border border-[#828790] bg-white">
            {tree.map((n) => (
              <TreeRow key={n.label} node={n} />
            ))}
          </ul>
        </section>

        <section className="flex min-w-0 flex-1 flex-col pr-0.5">
          <div role="tablist" className="flex h-[30px] shrink-0 items-end">
            {["Start", "View 1", "View 2"].map((t) => {
              const on = t === "View 2";
              return (
                <div
                  key={t}
                  className={`flex items-center justify-between border border-b-0 border-[#e2e2e2] pr-3 ${
                    on ? "h-[30px] w-[102px] bg-[#fafafa] pb-0.5 pl-4" : "h-7 bg-[#f3f3f3] pb-0.5"
                  } ${t === "Start" ? "w-[85px] pl-3" : ""} ${t === "View 1" ? "w-[98px] pl-[15px]" : ""}`}
                >
                  <button role="tab" aria-selected={on}>{t}</button>
                  <button aria-label={`Close ${t}`}>
                    <Cross />
                  </button>
                </div>
              );
            })}
          </div>
          <div className="mb-1.5 min-h-0 flex-1 border border-[#828790]">
            <div className="relative h-full w-full overflow-hidden">
              <MapCanvas />
              <p className="absolute bottom-[11px] left-1.5 flex h-8 items-center gap-[5px] bg-[#f0f0f0]/80 pr-3 pl-1.5">
                © <a href="#stadia" className="text-[#0000ff] underline underline-offset-2">Stadia Maps</a> ©{" "}
                <a href="#omt" className="text-[#0000ff] underline underline-offset-2">OpenMapTiles</a> ©{" "}
                <a href="#osm" className="text-[#0000ff] underline underline-offset-2">OpenStreetMap contributors</a>
              </p>
            </div>
          </div>
        </section>

        <section className="flex w-[32.850%] shrink-0 flex-col">
          <DockTitle title="Feature Information" />
          <div className="flex h-[37px] shrink-0 items-center pr-1.5 pb-1 whitespace-nowrap">
            <label htmlFor="feature-index">Features Selected:</label>
            <input id="feature-index" defaultValue="1" className="mr-2 ml-[9px] h-[26px] w-3.5 border border-[#e6e6e6] bg-[#f6f6f6] text-center text-[#888]" />
            of 1
            <button aria-label="Previous feature" className="ml-5">
              <svg viewBox="0 0 6 10" className="h-2.5 w-1.5"><path d="M6 0v10L0 5z" fill="#777" /></svg>
            </button>
            <button aria-label="Next feature" className="ml-[22px]">
              <svg viewBox="0 0 6 10" className="h-2.5 w-1.5"><path d="M0 0v10l6-5z" fill="#999" /></svg>
            </button>
            <span className="ml-auto">In:</span>
            <span className="ml-3">NetworkConveyanceLink</span>
          </div>
          <FeatureTable />
          <div className="flex h-9 shrink-0 items-end gap-2 pr-[26px]">
            <div className="relative flex h-7 flex-1 items-center rounded-sm border border-b-[#828790] border-[#dcdcdc] bg-[#fdfdfd]">
              <svg viewBox="0 0 18 18" className="ml-1 size-[18px]" fill="none" aria-hidden="true">
                <circle cx="7" cy="7" r="5.500" stroke="#2b3d47" strokeWidth="2.200" />
                <path d="M11 11l5.500 6" stroke="#2b3d47" strokeWidth="3" />
              </svg>
              <input aria-label="Filter" placeholder="Filter" className="h-full flex-1 bg-transparent pl-2 placeholder:text-[#888]" />
              <span className="mr-1">
                <Chevron />
              </span>
            </div>
            <span className="leading-7">in</span>
            <div className="flex h-7 w-[105px]">
              <Select label="Filter column" value="Any" className="pl-1" />
            </div>
          </div>
        </section>
      </main>

      <footer className="flex h-[33px] shrink-0 items-center justify-end whitespace-nowrap">
        <span className="mr-1.5">X:</span>
        <output className="flex h-[29px] w-[75px] items-center justify-end border-x border-[#d3d3d3] pr-0.5">-122.9461</output>
        <span className="w-[27px] text-center">Y:</span>
        <output className="flex h-[29px] w-[60px] items-center justify-end border-x border-[#d3d3d3] pr-0.5">49.2496</output>
        <div className="mr-0.5 ml-[5px] flex h-7 w-[43.400%]">
          <Select label="Coordinate system" value="LL84" className="pl-1" />
        </div>
        <span className="flex h-[29px] w-[59px] items-center overflow-hidden border-l border-[#d3d3d3] pl-1">DEGREE</span>
      </footer>
    </div>
  );
}
